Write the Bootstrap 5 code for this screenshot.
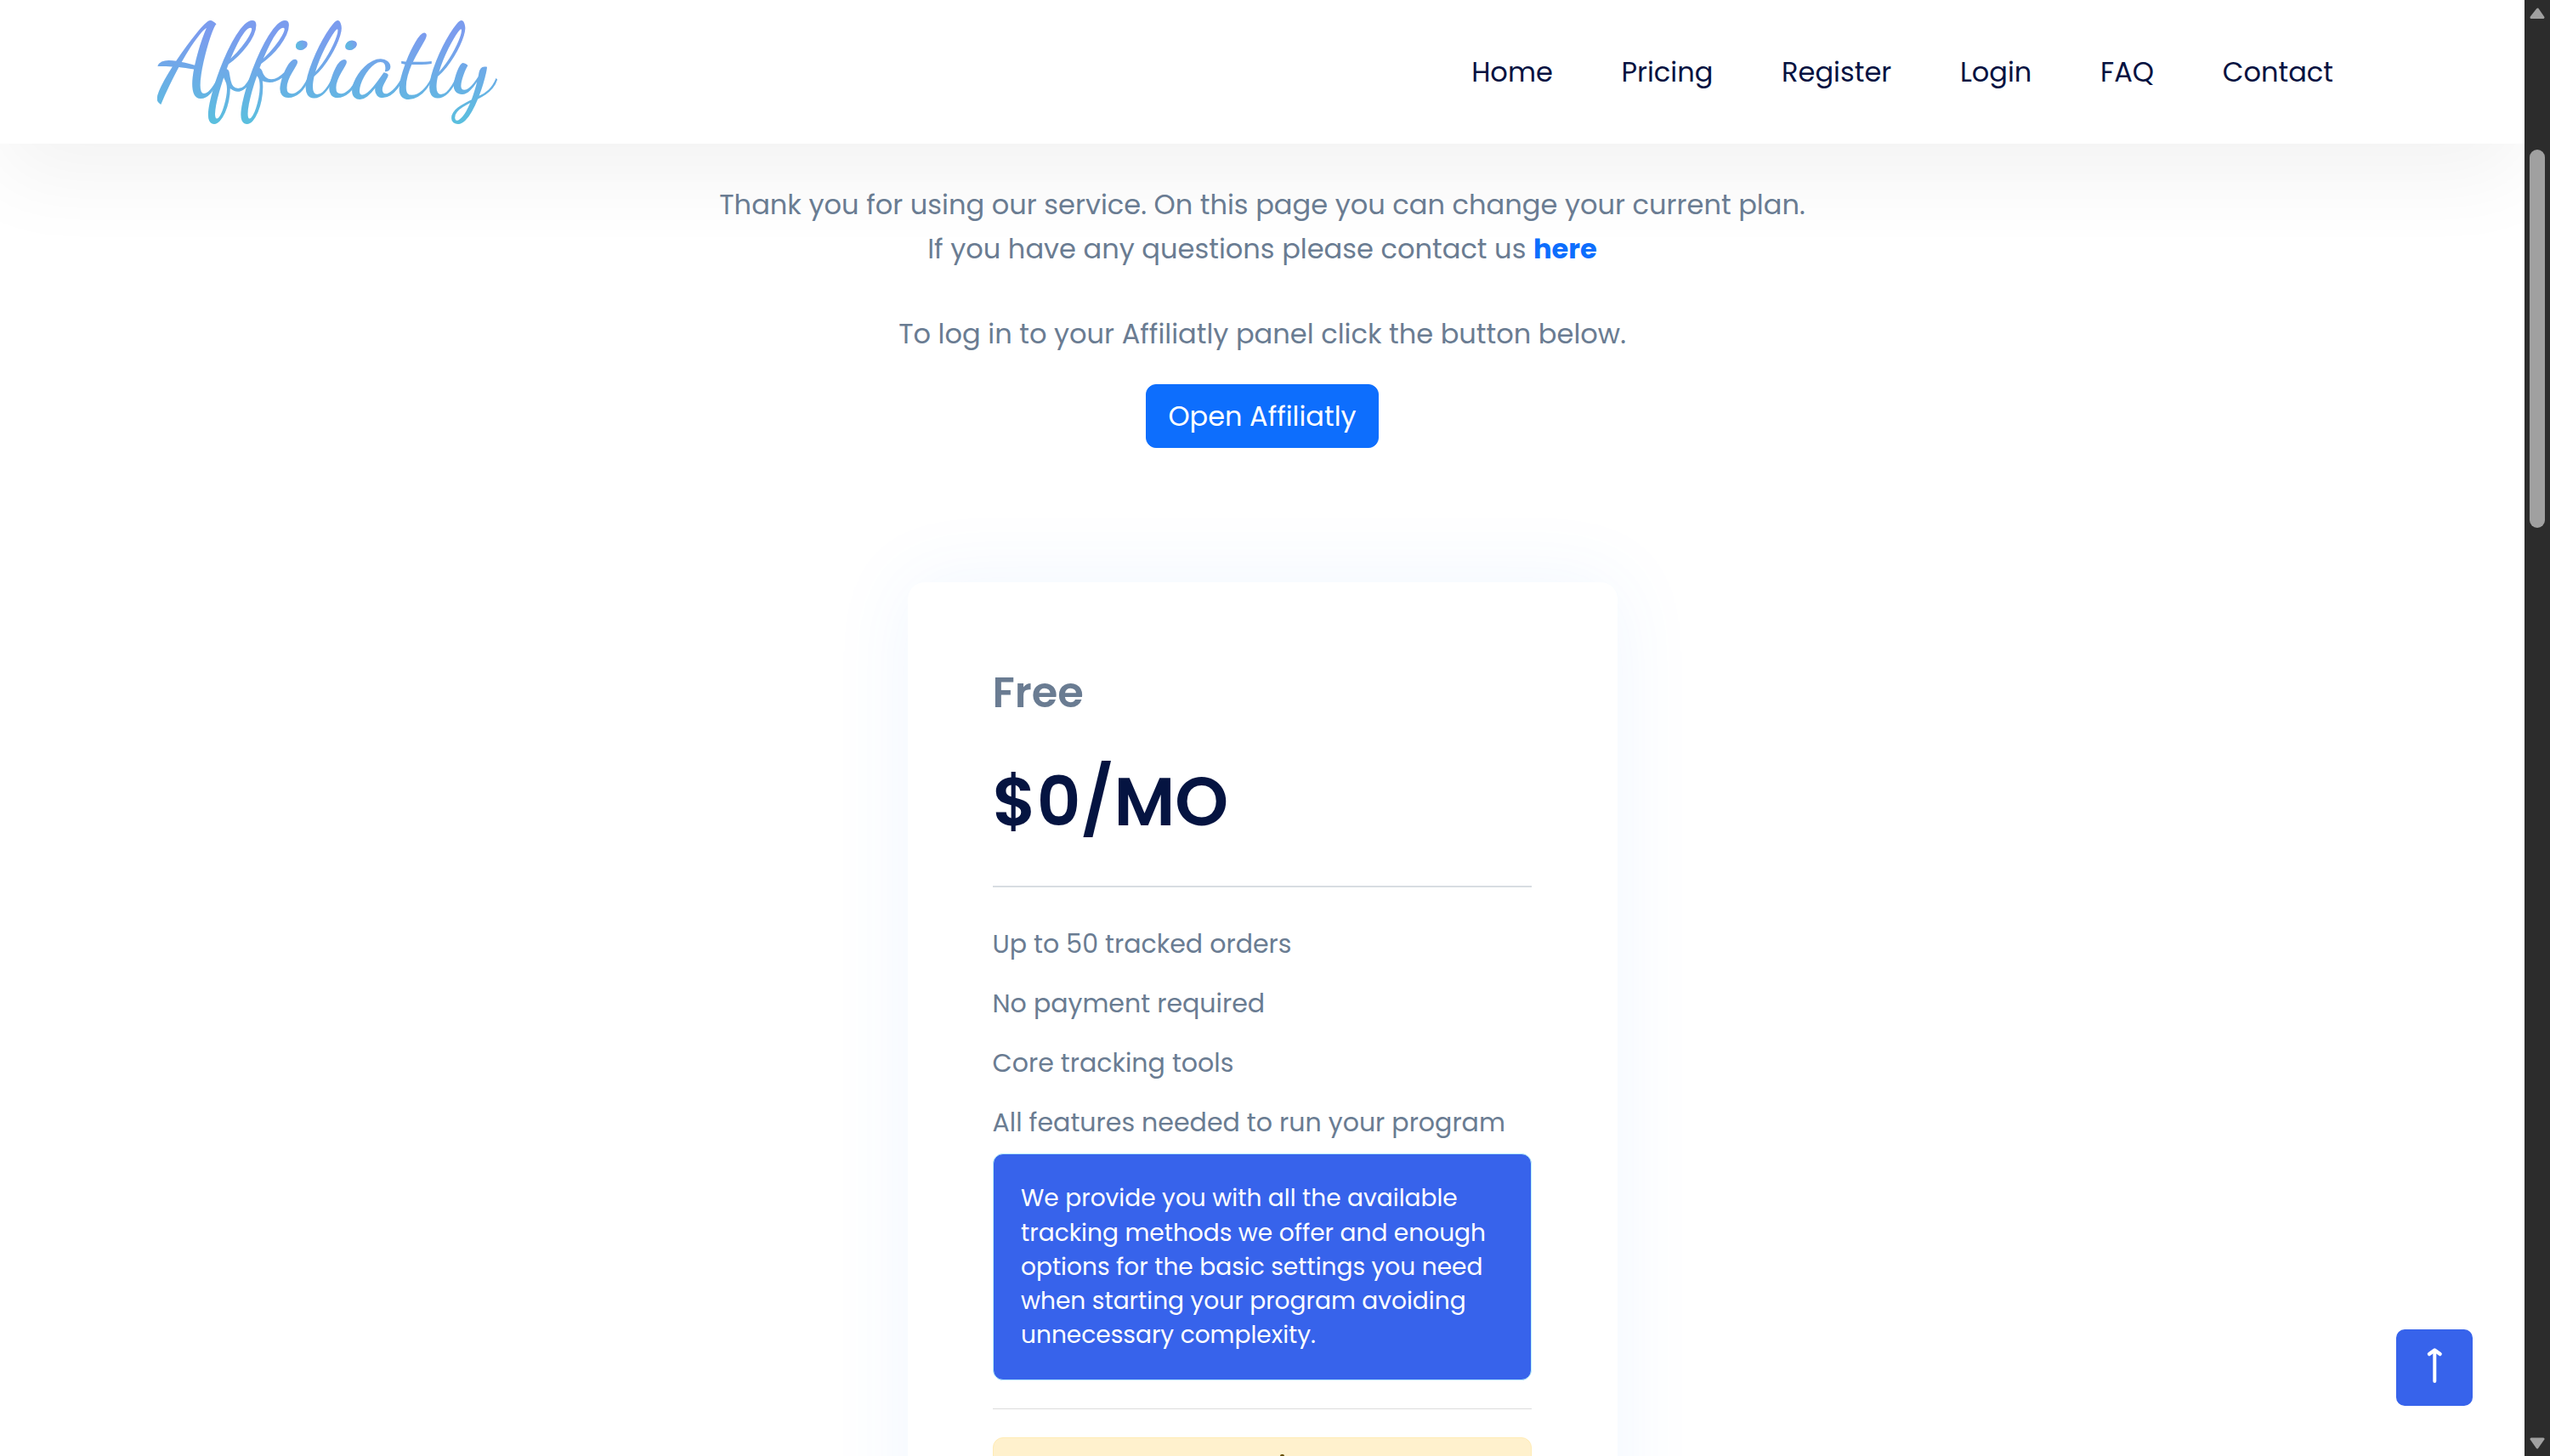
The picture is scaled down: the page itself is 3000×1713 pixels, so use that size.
<!DOCTYPE html>
<html lang="en">
<head>
  <meta charset="UTF-8" />
  <meta name="viewport" content="width=device-width,initial-scale=1" />
  <title>Affiliatly - Change plan</title>
  <!-- Bootstrap CSS -->
  <link href="https://cdn.jsdelivr.net/npm/bootstrap@5.3.0/dist/css/bootstrap.min.css" rel="stylesheet" />
  <style>
    body {
      font-family: Poppins, Inter, "Liberation Sans", sans-serif;
      font-size: 32.08px;
      line-height: 52px;
      color: #6a7c92;
      height: 100vh;
      overflow: hidden;
    }
    .site-header {
      height: 169px;
      padding: 0 225px 0 185px;
      box-shadow: 0 40px 100px rgba(0,0,0,0.05);
    }
    .brand-logo {
      display: block;
      width: 402px;
      height: 169px;
      font-family: "Dancing Script", "Liberation Serif", cursive;
      font-size: 121px;
      font-weight: 500;
    }
    .site-menu {
      gap: 80.6px;
    }
    .site-menu .nav-link {
      color: #061241;
      padding: 0;
    }
    .intro {
      padding-top: 45.5px;
    }
    .intro p {
      margin-bottom: 48.5px;
    }
    .intro .login-note {
      margin-bottom: 33px;
    }
    .btn-open {
      --bs-btn-bg: #0d6efd;
      font-size: 32px;
      line-height: 48px;
      padding: 12.5px 25px;
      border-radius: 12px;
    }
    .link-here {
      color: #0d6efd;
    }
    .plan-card {
      width: 835px;
      height: 1200px;
      margin-top: 157.5px;
      padding: 100px 101px 0 100px;
      border-radius: 20px;
      box-shadow: 0 0 95px rgba(60,135,255,0.08);
    }
    .plan-name {
      font-size: 49.5px;
      line-height: 60px;
      color: #6a7c92;
      margin-bottom: 50.5px;
    }
    .plan-price {
      font-size: 80px;
      line-height: 96px;
      color: #051441;
      margin-bottom: 51px;
    }
    .plan-line {
      height: 2px;
      background: #d8dde2;
      margin-bottom: 44px;
    }
    .plan-features {
      font-size: 30.05px;
      line-height: 45px;
      gap: 24.9px;
      margin-bottom: 14.3px;
    }
    .plan-note {
      font-size: 28.05px;
      line-height: 40.1px;
      background: #3763eb;
      border: 1px solid #b6effb;
      border-radius: 12px;
      padding: 32.5px;
      margin-bottom: 32.3px;
    }
    .thin-line {
      height: 1px;
      background: #dcdcdc;
      margin-bottom: 33px;
    }
    .plan-current {
      height: 120px;
      background: #fff1cd;
      border: 1px solid #ffecb5;
      border-radius: 12px;
      padding: 19px 0 0 47px;
    }
    .plan-current span {
      width: 5px;
      height: 5px;
      border-radius: 2px;
      background: #664d03;
    }
    .to-top {
      position: fixed;
      right: 91px;
      bottom: 59px;
      width: 90px;
      height: 90px;
      border-radius: 10px;
      background: #3763eb;
    }
    .scroll-track {
      width: 30px;
      background: #2c2c2c;
      padding: 9px 0 8px 5px;
    }
    .scroll-track svg {
      display: block;
    }
    .scroll-thumb {
      width: 18px;
      height: 445px;
      margin: 153px 0 auto 1px;
      border-radius: 9px;
      background: #a0a0a0;
    }
  </style>
</head>
<body class="d-flex bg-white">
  <div class="flex-grow-1 overflow-hidden">
    <header class="site-header d-flex justify-content-between align-items-center bg-white">
      <a href="#" aria-label="Affiliatly">
        <svg class="brand-logo" viewBox="0 0 402 169">
          <defs>
            <linearGradient id="logoFill" gradientUnits="userSpaceOnUse" x1="0" y1="23" x2="0" y2="145">
              <stop offset="0.15" stop-color="#7b9cee" />
              <stop offset="1" stop-color="#5abfde" />
            </linearGradient>
            <linearGradient id="dotFill">
              <stop offset="0" stop-color="#5abfde" />
              <stop offset="1" stop-color="#7b9cee" />
            </linearGradient>
          </defs>
          <text x="1" y="111.500" textLength="395" fill="url(#logoFill)">Affiliatly</text>
          <ellipse cx="169.500" cy="53" rx="6.800" ry="5.200" transform="rotate(-20 169.500 53)" fill="url(#dotFill)" />
          <ellipse cx="228" cy="53" rx="6.800" ry="5.200" transform="rotate(-20 228 53)" fill="url(#dotFill)" />
        </svg>
      </a>
      <nav class="nav site-menu flex-nowrap">
        <a class="nav-link" href="#">Home</a>
        <a class="nav-link" href="#">Pricing</a>
        <a class="nav-link" href="#">Register</a>
        <a class="nav-link" href="#">Login</a>
        <a class="nav-link" href="#">FAQ</a>
        <a class="nav-link" href="#">Contact</a>
      </nav>
    </header>

    <main>
      <section class="intro text-center">
        <p>Thank you for using our service. On this page you can change your current plan.<br />
          If you have any questions please contact us <a class="link-here fw-bold text-decoration-none" href="#">here</a></p>
        <p class="login-note">To log in to your Affiliatly panel click the button below.</p>
        <a class="btn btn-primary btn-open d-table mx-auto" href="#">Open Affiliatly</a>
      </section>

      <section class="plan-card bg-white mx-auto">
        <h4 class="plan-name fw-semibold">Free</h4>
        <h2 class="plan-price fw-semibold">$0/MO</h2>
        <div class="plan-line"></div>
        <ul class="plan-features list-unstyled d-flex flex-column">
          <li>Up to 50 tracked orders</li>
          <li>No payment required</li>
          <li>Core tracking tools</li>
          <li>All features needed to run your program</li>
        </ul>
        <div class="plan-note text-white">We provide you with all the available tracking methods we offer and enough options for the basic settings you need when starting your program avoiding unnecessary complexity.</div>
        <div class="thin-line"></div>
        <div class="plan-current d-flex justify-content-center"><span></span></div>
      </section>
    </main>
  </div>

  <a class="to-top" href="#" aria-label="Back to top">
    <svg class="d-block" width="90" height="90" viewBox="0 0 90 90" fill="none" stroke="#fff" stroke-linecap="round" stroke-linejoin="round">
      <path d="M45.300 25V61" stroke-width="4" />
      <path d="M39 29L45.300 24.500L51.600 29" stroke-width="4.500" />
    </svg>
  </a>

  <!-- scrollbar -->
  <div class="scroll-track d-flex flex-column flex-shrink-0">
    <svg width="20" height="14" viewBox="0 0 20 14"><path d="M10.500 2L17 11.500H3Z" fill="#a0a0a0" stroke="#a0a0a0" stroke-width="3" stroke-linejoin="round" /></svg>
    <div class="scroll-thumb"></div>
    <svg width="20" height="14" viewBox="0 0 20 14"><path d="M10 12L17 2H3Z" fill="#a0a0a0" stroke="#a0a0a0" stroke-width="3" stroke-linejoin="round" /></svg>
  </div>

  <!-- Bootstrap JS bundle -->
  <script src="https://cdn.jsdelivr.net/npm/bootstrap@5.3.0/dist/js/bootstrap.bundle.min.js"></script>
</body>
</html>
